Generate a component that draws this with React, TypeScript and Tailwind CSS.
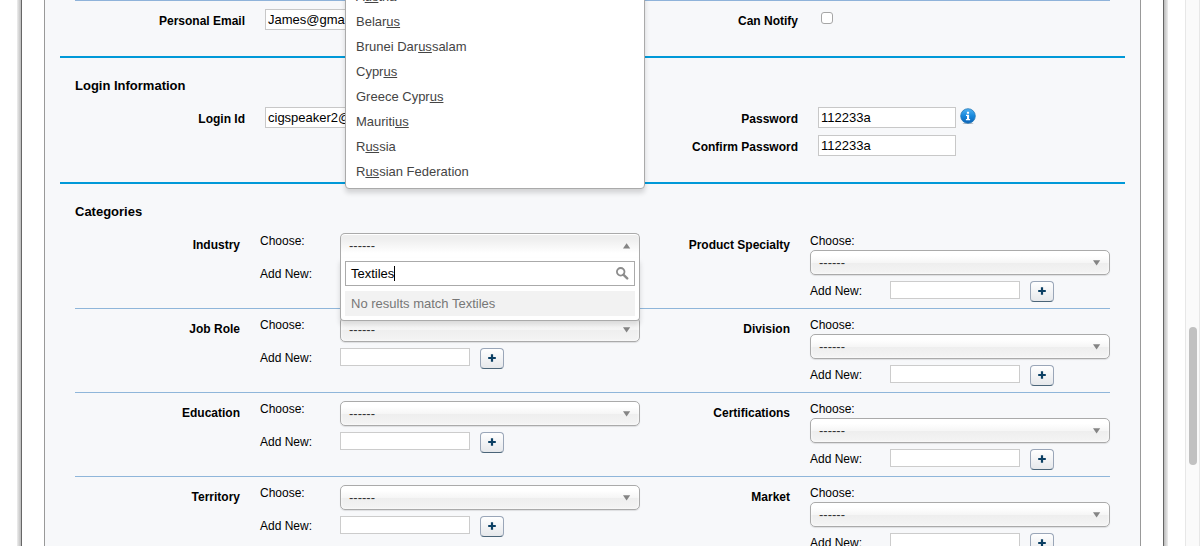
import React from "react";

const countries: [string, string, string][] = [
  ["A", "us", "tria"],
  ["Belar", "us", ""],
  ["Brunei Dar", "us", "salam"],
  ["Cypr", "us", ""],
  ["Greece Cypr", "us", ""],
  ["Mauriti", "us", ""],
  ["R", "us", "sia"],
  ["R", "us", "sian Federation"],
];

const categoryRows: [string, string][] = [
  ["Industry", "Product Specialty"],
  ["Job Role", "Division"],
  ["Education", "Certifications"],
  ["Territory", "Market"],
];

function Arrow({ up = false }: { up?: boolean }) {
  return (
    <svg width="8" height="6" viewBox="0 0 8 6" className="mr-2 shrink-0">
      <path d={up ? "M3.6 0.2 7.2 5.6H0Z" : "M0 0.2H7.2L3.6 5.6Z"} fill="#848484" />
    </svg>
  );
}

function Select() {
  return (
    <div className="flex h-[25px] w-[300px] items-center justify-between rounded-[5px] border border-[#aaa] bg-[linear-gradient(#fff_20%,#f6f6f6_50%,#eee_52%,#f4f4f4_100%)] pl-2 text-[13px] text-[#333] shadow-[inset_0_0_3px_#fff,0_1px_1px_rgba(0,0,0,0.1)]">
      <span className="leading-[23px]">------</span>
      <Arrow />
    </div>
  );
}

function OpenSelect() {
  return (
    <div className="relative z-10 h-[25px] w-[300px]">
      <div className="flex h-[25px] items-center justify-between rounded-t-[5px] border border-b-0 border-[#aaa] bg-[linear-gradient(#eee_20%,#fff_80%)] pl-2 text-[13px] text-[#333] shadow-[inset_0_1px_0_#fff]">
        <span className="leading-[24px]">------</span>
        <Arrow up />
      </div>
      <div className="absolute top-[25px] left-0 h-[63px] w-[300px] rounded-b-[4px] border border-t-0 border-[#aaa] bg-white px-1 pt-[3px] text-[13px] shadow-[0_4px_5px_rgba(0,0,0,0.15)]">
        <div className="flex h-[25px] items-center border border-[#aaa] pr-[5px] pl-[5px] text-black">
          <span className="leading-[23px]">Textiles</span>
          <span className="h-[15px] w-px bg-black" />
          <svg width="13" height="13" viewBox="0 0 13 13" className="mb-px ml-auto" fill="none" stroke="#8c8c8c">
            <circle cx="4.7" cy="4.8" r="3.8" strokeWidth="1.8" />
            <path d="M7.6 7.8 11.2 11.4" strokeWidth="2.4" strokeLinecap="round" />
          </svg>
        </div>
        <div className="mt-[5px] h-[25px] bg-[#f2f2f2] pl-[6px] leading-[25px] text-[#777]">No results match Textiles</div>
      </div>
    </div>
  );
}

function AddControls() {
  return (
    <div className="flex items-start gap-[10px]">
      <div className="h-[18px] w-[130px] border border-[#ccc] bg-white" />
      <button className="flex h-[21px] w-6 items-center justify-center rounded-[4px] border border-[#9aa6b8] border-b-[#4a6478] bg-[linear-gradient(#fff,#e6e8eb)]">
        <svg width="8" height="8" viewBox="0 0 8 8" className="mb-px">
          <path d="M4 0.3V7.7M0.2 4H7.8" stroke="#0b3f63" strokeWidth="2.2" />
        </svg>
      </button>
    </div>
  );
}

function CategoryRow({ left, right, open }: { left: string; right: string; open: boolean }) {
  return (
    <div className="mx-[15px] flex h-[84px] shrink-0 border-b border-[#8fb6da] text-[12px] leading-4">
      <div className="w-[165px] pt-3 text-right font-bold">{left}</div>
      <div className="ml-5 w-20 pt-2">
        <div>Choose:</div>
        <div className="mt-[17px]">Add New:</div>
      </div>
      <div className="w-[300px] pt-2">
        {open ? <OpenSelect /> : <Select />}
        <div className="mt-[6px]">
          <AddControls />
        </div>
      </div>
      <div className="w-[150px] pt-3 text-right font-bold">{right}</div>
      <div className="ml-5 w-[300px] pt-2">
        <div className="mb-px">Choose:</div>
        <Select />
        <div className="mt-[6px] flex">
          <div className="w-20 pt-[2px]">Add New:</div>
          <AddControls />
        </div>
      </div>
    </div>
  );
}

function Field({ value }: { value: string }) {
  return (
    <div className="h-[21px] w-[138px] border border-[#c8c8c8] bg-white pl-[2px] text-[13px] leading-[19px]">{value}</div>
  );
}

function InfoIcon() {
  return (
    <svg width="16" height="17" viewBox="0 0 16 17" className="mt-px ml-1">
      <defs>
        <linearGradient id="infoFill" x1="0" y1="0" x2="0" y2="1">
          <stop offset="0" stopColor="#4fb2f2" />
          <stop offset="0.5" stopColor="#1788dc" />
          <stop offset="1" stopColor="#0d62b5" />
        </linearGradient>
      </defs>
      <ellipse cx="8" cy="15.4" rx="5.5" ry="0.7" fill="#b8bec5" />
      <circle cx="8" cy="8" r="7.3" fill="url(#infoFill)" stroke="#2579b8" strokeWidth="0.8" />
      <path d="M6.9 3.8H9.1V5.7H6.9ZM6 6.8H9.1V11H10.1V12.2H5.9V11H7V8H6Z" fill="#fff" />
    </svg>
  );
}

export default function App() {
  return (
    <div className="relative flex h-[546px] w-[1200px] overflow-hidden bg-white font-['Liberation_Sans',Arial,sans-serif] text-black">
      <div className="ml-[17px] w-1 shrink-0 bg-linear-to-r from-[#eee] to-[#bbb]" />
      <div className="flex w-[1143px] shrink-0 border-x border-[#666] px-[22px]">
        <main className="flex w-[1097px] flex-col overflow-hidden border-x border-[#999] bg-[#f7f8fa] px-[15px]">
          <section className="h-14 shrink-0">
            <div className="mx-[15px] flex border-t border-[#8fb3da] text-[12px] leading-4">
              <div className="w-[170px] pt-3 text-right font-bold">Personal Email</div>
              <div className="ml-5 w-[138px] pt-2">
                <Field value="James@gmail.com" />
              </div>
              <div className="w-[395px] pt-3 text-right font-bold">Can Notify</div>
              <div className="mt-[11px] ml-[23px] h-3 w-3 rounded-[3px] border border-[#a6a6a6] bg-white" />
            </div>
          </section>
          <section className="h-[126px] shrink-0 border-t-2 border-[#0099d8] px-[15px] pt-[19px]">
            <h2 className="text-[13px] leading-[18px] font-bold">Login Information</h2>
            <div className="mt-3 flex text-[12px] leading-4">
              <div className="w-[170px] pt-1 text-right font-bold">Login Id</div>
              <div className="ml-5">
                <Field value="cigspeaker2@gmail" />
              </div>
              <div className="w-[395px] pt-1 text-right font-bold">
                <div>Password</div>
                <div className="mt-3">Confirm Password</div>
              </div>
              <div className="ml-5 flex flex-col gap-[7px]">
                <div className="flex items-start">
                  <Field value="112233a" />
                  <InfoIcon />
                </div>
                <Field value="112233a" />
              </div>
            </div>
          </section>
          <section className="border-t-2 border-[#0099d8]">
            <h2 className="h-[41px] pt-[19px] pl-[15px] text-[13px] leading-[18px] font-bold">Categories</h2>
            {categoryRows.map(([left, right], i) => (
              <CategoryRow key={left} left={left} right={right} open={i === 0} />
            ))}
          </section>
        </main>
      </div>
      <div className="w-1 shrink-0 bg-linear-to-r from-[#bbb] to-[#eee]" />
      <div className="ml-[17px] flex w-[15px] justify-center border-x border-[#e7e7e7] bg-[#fafafa]">
        <div className="mt-[327px] ml-px h-[138px] w-2 rounded-full bg-[#c1c1c1]" />
      </div>
      <ul className="absolute top-[-17px] left-[345px] h-[206px] w-[300px] rounded-b-[4px] border border-[#aaa] bg-white px-[10px] text-[13px] text-[#444] shadow-[0_4px_5px_rgba(0,0,0,0.15)]">
        {countries.map(([before, match, after]) => (
          <li key={before + after} className="h-[25px] leading-[25px]">
            {before}
            <em className="not-italic underline">{match}</em>
            {after}
          </li>
        ))}
      </ul>
    </div>
  );
}
